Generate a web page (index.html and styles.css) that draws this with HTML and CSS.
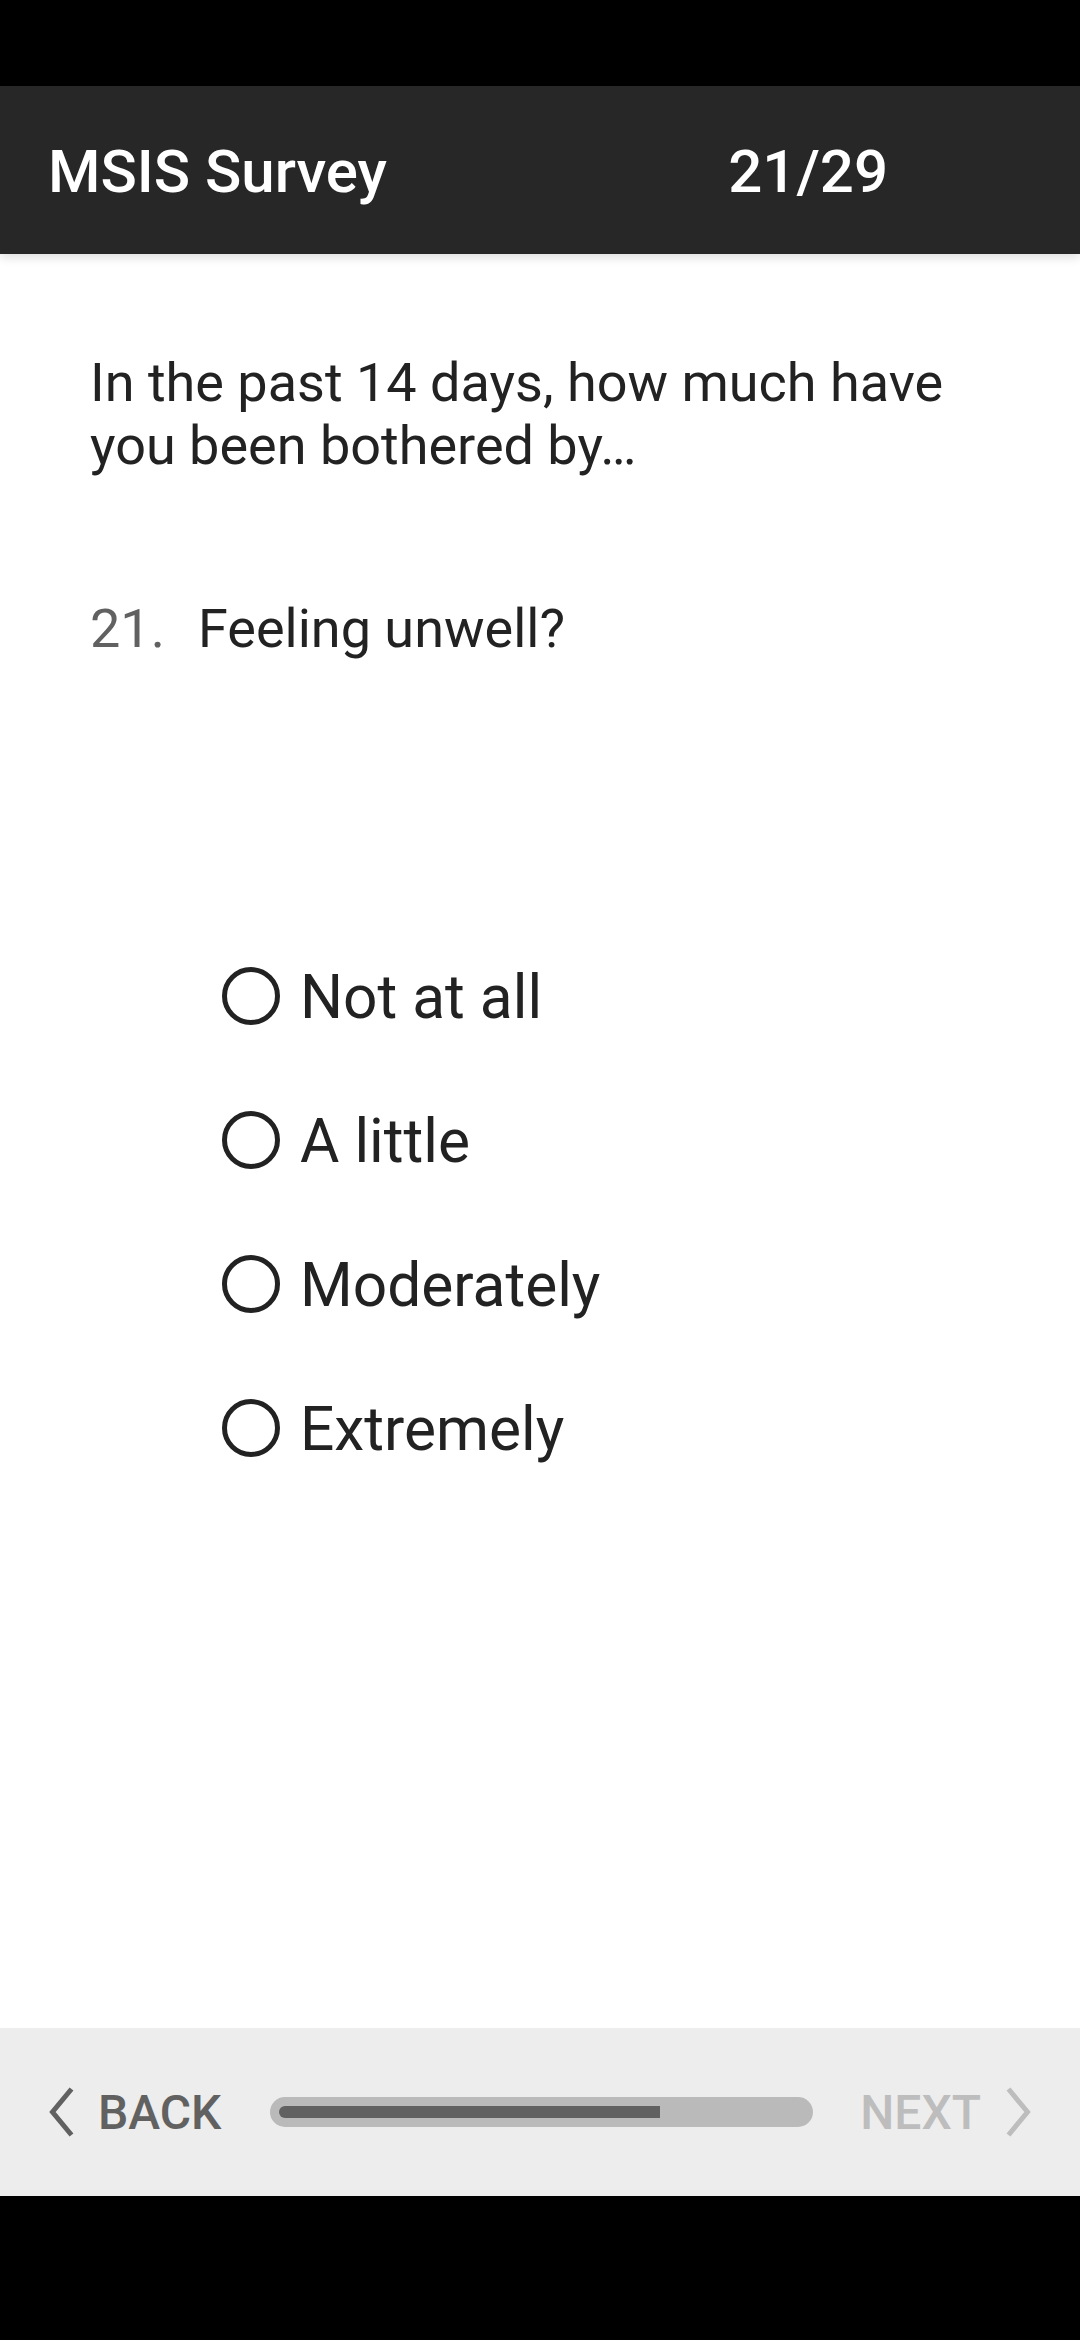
FILE: index.html
```html
<!DOCTYPE html>
<html lang="en">
<head>
<meta charset="utf-8">
<title>MSIS Survey</title>
<link rel="stylesheet" href="styles.css">
</head>
<body>
<div class="phone">
  <div class="status-bar"></div>
  <header class="app-bar">
    <h1 class="app-title">MSIS Survey</h1>
    <span class="app-counter">21/29</span>
  </header>
  <main class="content">
    <p class="intro">In the past 14 days, how much have you been bothered by…</p>
    <div class="item">
      <span class="item-num">21.</span>
      <span class="item-text">Feeling unwell?</span>
    </div>
    <ul class="options">
      <li class="option">
        <svg class="radio" width="58" height="58" viewBox="0 0 58 58"><circle cx="29" cy="29" r="26.5" fill="none" stroke="#222" stroke-width="5"/></svg>
        <span class="option-label">Not at all</span>
      </li>
      <li class="option">
        <svg class="radio" width="58" height="58" viewBox="0 0 58 58"><circle cx="29" cy="29" r="26.5" fill="none" stroke="#222" stroke-width="5"/></svg>
        <span class="option-label">A little</span>
      </li>
      <li class="option">
        <svg class="radio" width="58" height="58" viewBox="0 0 58 58"><circle cx="29" cy="29" r="26.5" fill="none" stroke="#222" stroke-width="5"/></svg>
        <span class="option-label">Moderately</span>
      </li>
      <li class="option">
        <svg class="radio" width="58" height="58" viewBox="0 0 58 58"><circle cx="29" cy="29" r="26.5" fill="none" stroke="#222" stroke-width="5"/></svg>
        <span class="option-label">Extremely</span>
      </li>
    </ul>
  </main>
  <footer class="nav-bar">
    <div class="nav-btn nav-back">
      <svg class="chev" width="25" height="50" viewBox="0 0 25 50"><polyline points="22.5,2 3.5,25 22.5,48" fill="none" stroke="#616161" stroke-width="5"/></svg>
      <span>BACK</span>
    </div>
    <div class="progress">
      <div class="progress-fill" style="width: 381px"></div>
    </div>
    <div class="nav-btn nav-next">
      <span>NEXT</span>
      <svg class="chev" width="25" height="50" viewBox="0 0 25 50"><polyline points="2.5,2 21.5,25 2.5,48" fill="none" stroke="#bdbdbd" stroke-width="5"/></svg>
    </div>
  </footer>
  <div class="system-nav"></div>
</div>
</body>
</html>
```

FILE: styles.css
```css
* { box-sizing: border-box; }

html, body {
  margin: 0;
  padding: 0;
  background: #000;
}

body {
  font-family: Roboto, "Noto Sans", "Liberation Sans", sans-serif;
  width: 1080px;
  height: 2340px;
  overflow: hidden;
}

.phone {
  display: flex;
  flex-direction: column;
  height: 2340px;
}

.status-bar {
  height: 86px;
  background: #000;
  flex: none;
}

.app-bar {
  position: relative;
  z-index: 2;
  height: 168px;
  flex: none;
  display: flex;
  align-items: center;
  padding: 3px 0 0 48px;
  background: #272727;
  box-shadow: 0 3px 10px rgba(0, 0, 0, 0.14);
}

.app-title {
  margin: 0;
  flex: 1;
  font-size: 60px;
  font-weight: 500;
  color: #fff;
}

.app-counter {
  margin-right: 192px;
  font-size: 60px;
  font-weight: 500;
  color: #fff;
}

.content {
  flex: 1;
  background: #fff;
  padding: 97px 0 0 0;
}

.intro {
  margin: 0;
  padding: 0 88px 0 90px;
  font-size: 54px;
  color: #222;
}

.item {
  display: flex;
  margin-top: 120px;
  padding-left: 90px;
  font-size: 54px;
}

.item-num {
  width: 108px;
  color: #616161;
}

.item-text {
  color: #222;
}

.options {
  list-style: none;
  margin: 264px 0 0 0;
  padding: 0 0 0 222px;
}

.option {
  height: 144px;
  display: flex;
  align-items: center;
  gap: 20px;
}

.radio {
  flex: none;
  display: block;
}

.option-label {
  font-size: 60.4px;
  color: #222;
  padding-top: 3px;
}

.nav-bar {
  height: 168px;
  flex: none;
  display: flex;
  align-items: center;
  padding: 0 49px;
  background: #ededed;
}

.nav-btn {
  display: flex;
  align-items: center;
  font-size: 48px;
  font-weight: 500;
}

.nav-back {
  width: 221px;
  gap: 24px;
  color: #616161;
}

.nav-next {
  width: 218px;
  justify-content: flex-end;
  gap: 25px;
  color: #bdbdbd;
}

.chev {
  display: block;
  flex: none;
}

.progress {
  width: 543px;
  flex: none;
  height: 30px;
  padding: 9px;
  border-radius: 15px;
  background: #bababa;
}

.progress-fill {
  height: 12px;
  border-radius: 6px 0 0 6px;
  background: #616161;
}

.system-nav {
  height: 144px;
  flex: none;
  background: #000;
}
```
